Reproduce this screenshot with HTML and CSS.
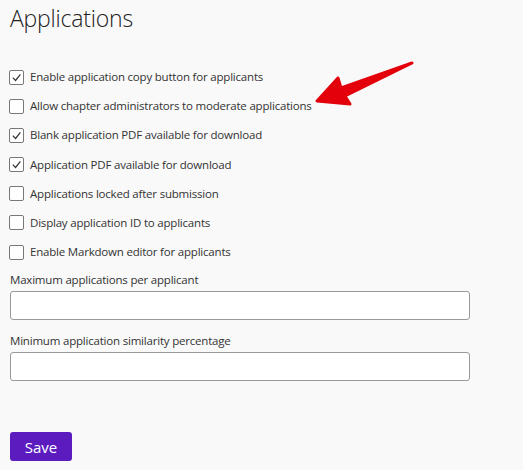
FILE: index.html
```html
<!DOCTYPE html>
<html lang="en">
<head>
  <meta charset="UTF-8">
  <title>Applications</title>
  <link rel="stylesheet" href="styles.css">
</head>
<body>
  <div class="page">
    <h1>Applications</h1>
    <div class="options">
      <label class="option"><span class="box checked"><svg viewBox="0 0 14 14"><path d="M3 7.2 L6 10.2 L11.2 3.6" /></svg></span>Enable application copy button for applicants</label>
      <label class="option"><span class="box"></span>Allow chapter administrators to moderate applications</label>
      <label class="option"><span class="box checked"><svg viewBox="0 0 14 14"><path d="M3 7.2 L6 10.2 L11.2 3.6" /></svg></span>Blank application PDF available for download</label>
      <label class="option"><span class="box checked"><svg viewBox="0 0 14 14"><path d="M3 7.2 L6 10.2 L11.2 3.6" /></svg></span>Application PDF available for download</label>
      <label class="option"><span class="box"></span>Applications locked after submission</label>
      <label class="option"><span class="box"></span>Display application ID to applicants</label>
      <label class="option"><span class="box"></span>Enable Markdown editor for applicants</label>
    </div>
    <div class="field">
      <label>Maximum applications per applicant</label>
      <input type="text">
    </div>
    <div class="field">
      <label>Minimum application similarity percentage</label>
      <input type="text">
    </div>
    <button class="save">Save</button>

    <!-- annotation arrow pointing at the second option -->
    <svg class="arrow" viewBox="0 0 120 60" width="120" height="60">
      <path d="M112 8 L41 33 L38 23 L17 46 L50 49 L45 41 Z" />
    </svg>
  </div>
</body>
</html>
```

FILE: styles.css
```css
body {
  margin: 0;
  background-color: #f9f9f9;
  font-family: "Open Sans", Arial, sans-serif;
  color: #333;
}
.page {
  position: relative;
  padding: 0 10px 10px 9px;
}
h1 {
  margin: 0 0 0 1px;
  padding-top: 2px;
  font-size: 23px;
  font-weight: 300;
  letter-spacing: -0.2px;
  color: #222;
  line-height: 32px;
}
.options {
  margin-top: 33px;
  display: flex;
  flex-direction: column;
  gap: 9.2px;
}
.option {
  display: flex;
  align-items: center;
  gap: 6px;
  font-size: 11.5px;
  letter-spacing: -0.2px;
  line-height: 20px;
  color: #333;
}
.box {
  width: 13px;
  height: 13px;
  border: 1px solid #777;
  border-radius: 2px;
  background: #fff;
  display: flex;
}
.box svg {
  width: 13px;
  height: 13px;
}
.box path {
  fill: none;
  stroke: #333;
  stroke-width: 1.3;
}
.field {
  margin-top: 10px;
  margin-left: 1px;
}
.options + .field {
  margin-top: 8px;
}
.field label {
  display: block;
  font-size: 11.5px;
  letter-spacing: -0.2px;
  line-height: 19px;
  margin-bottom: 2px;
}
.field input {
  display: block;
  box-sizing: border-box;
  width: 460px;
  height: 29px;
  border: 1px solid #999;
  border-radius: 3px;
  background: #fff;
  margin: 0;
}
.field + .field {
  margin-top: 11px;
}
.save {
  display: block;
  margin: 51px 0 0 1px;
  width: 62px;
  height: 29px;
  border: none;
  border-radius: 3px;
  background-color: #5b1bbf;
  color: #fff;
  font-family: "Open Sans", Arial, sans-serif;
  font-size: 15px;
  font-weight: 500;
}
.arrow {
  position: absolute;
  left: 300px;
  top: 55px;
}
.arrow path {
  fill: #e3000b;
  stroke: #e3000b;
  stroke-width: 3;
  stroke-linejoin: round;
}
```
